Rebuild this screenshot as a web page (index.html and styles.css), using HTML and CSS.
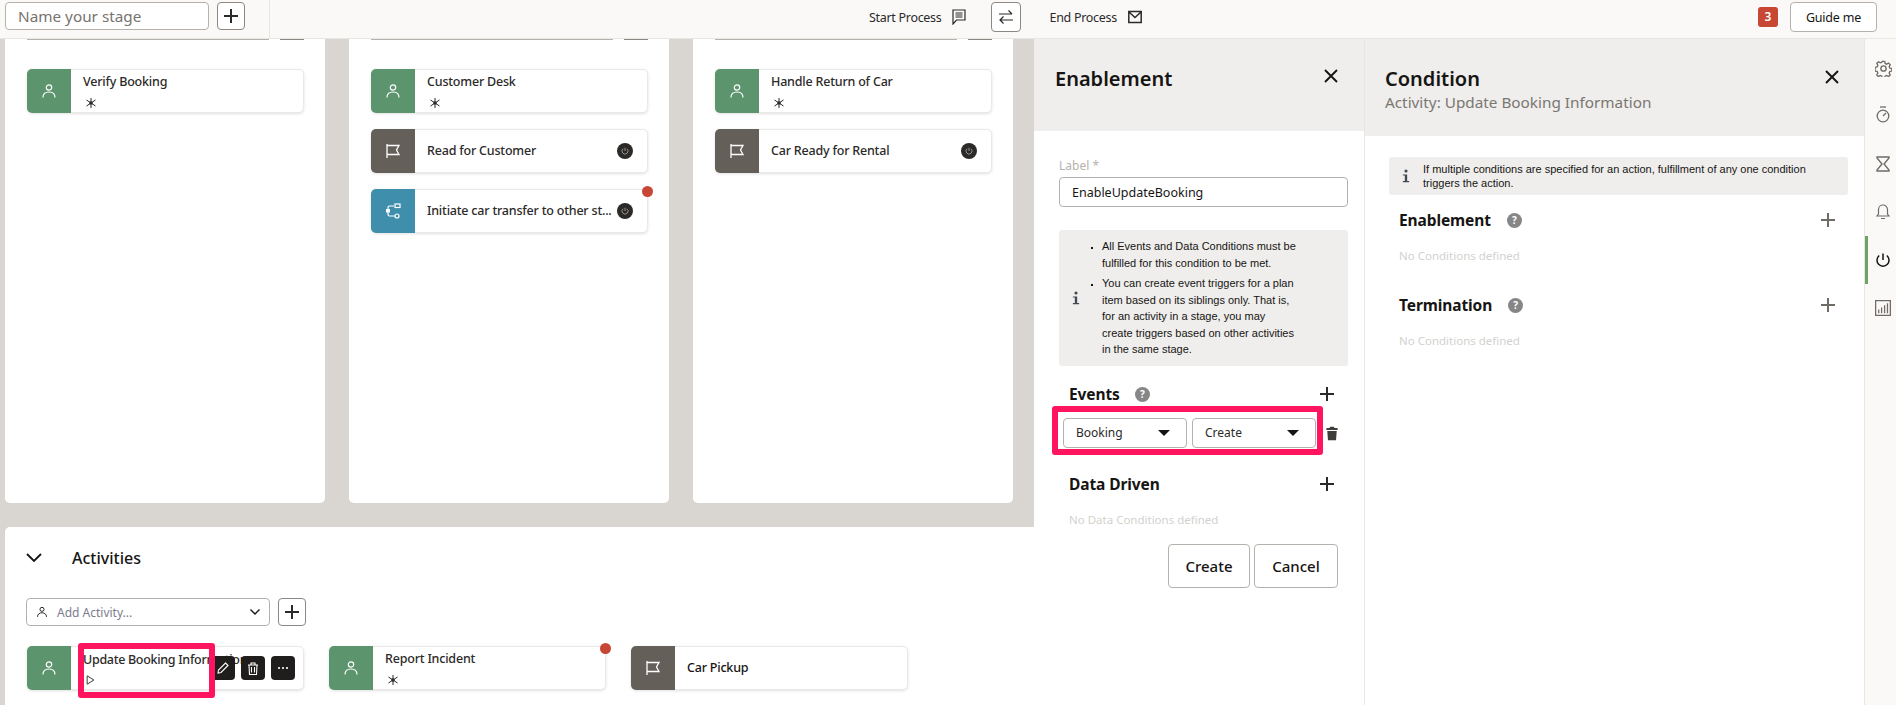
FILE: index.html
```html
<!DOCTYPE html>
<html>

<head>
    <meta charset="UTF-8">
    <title>Process Builder</title>
    <link rel="stylesheet" href="styles.css">
</head>

<body>
    <svg class="sprites" width="0" height="0">
        <symbol id="i-person" viewBox="0 0 16 16"><circle cx="8" cy="4.500" r="2.700" fill="none" stroke="currentColor" stroke-width="1.200"/><path d="M2 14.500c0-3.600 2.600-5.500 6-5.500s6 1.900 6 5.500" fill="none" stroke="currentColor" stroke-width="1.200"/></symbol>
        <symbol id="i-flag" viewBox="0 0 16 16"><path d="M2 1v14M2 2.500h12l-2.500 4.500 2.500 4.500H2" fill="none" stroke="currentColor" stroke-width="1.300"/></symbol>
        <symbol id="i-flow" viewBox="0 0 16 16"><path d="M9 3H4.500Q3 3 3 4.500v7Q3 13 4.500 13H10" fill="none" stroke="currentColor" stroke-width="1.200"/><rect x="10" y="1" width="5" height="3.500" fill="none" stroke="currentColor" stroke-width="1.200"/><rect x="1" y="6" width="4" height="3.500" fill="currentColor"/><circle cx="12" cy="13" r="2" fill="none" stroke="currentColor" stroke-width="1.200"/></symbol>
        <symbol id="i-star" viewBox="0 0 12 12"><path d="M6 1v10M1.500 3l9 6M10.500 3l-9 6" fill="none" stroke="currentColor" stroke-width="1"/><circle cx="6" cy="6" r="1.800" fill="currentColor"/></symbol>
        <symbol id="i-plus" viewBox="0 0 16 16"><path d="M8 1v14M1 8h14" fill="none" stroke="currentColor" stroke-width="2"/></symbol>
        <symbol id="i-close" viewBox="0 0 14 14"><path d="M1 1l12 12M13 1L1 13" fill="none" stroke="currentColor" stroke-width="1.900"/></symbol>
        <symbol id="i-power" viewBox="0 0 16 16"><path d="M8 1.500v6.500M4.200 3.500a6 6 0 1 0 7.600 0" fill="none" stroke="currentColor" stroke-width="1.500"/></symbol>
        <symbol id="i-info" viewBox="0 0 10 18"><circle cx="5" cy="2.500" r="2" fill="#3f4a55"/><path d="M1 7h5.500v8.500H9V17H1v-1.500h2.500V8.500H1z" fill="#3f4a55"/></symbol>
        <symbol id="i-trash" viewBox="0 0 14 16"><path d="M5 0h4l1 1.500h3.500V4H.5V1.500H4zM1.500 5h11l-.8 11H2.300z" fill="currentColor"/></symbol>
    </svg>

    <div class="topbar">
        <div class="stage-bar">
            <input class="stage-input" type="text" placeholder="Name your stage">
            <button class="icon-btn"><svg class="ico16"><use href="#i-plus"/></svg></button>
        </div>
        <div class="process-bar">
            <span class="process-label">Start Process</span>
            <svg class="process-icon" viewBox="0 0 14 16"><path d="M1 1h12v10H4.500L1 15zM3.500 4h7M3.500 6h7M3.500 8h7" fill="none" stroke="#2c2a28" stroke-width="1.200"/></svg>
            <button class="swap-btn"><svg width="16" height="16" viewBox="0 0 16 16"><path d="M1 5h13M10.500 1.500L14 5M15 11H2M5.500 7.500L2 11l3.500 3.500" fill="none" stroke="#2c2a28" stroke-width="1.200"/></svg></button>
            <span class="process-label">End Process</span>
            <svg class="process-icon" viewBox="0 0 14 14"><path d="M.8 1.500h12.400v11H.8zM1 2l6 5.500L13 2" fill="none" stroke="#2c2a28" stroke-width="1.500"/></svg>
        </div>
        <span class="count-badge">3</span>
        <button class="guide-btn">Guide me</button>
    </div>

    <div class="main">
        <div class="canvas">
            <div class="stages">
                <div class="stage">
                    <div class="stage-clip"><i></i><b></b></div>
                    <div class="task">
                        <span class="task-icon green"><svg class="ico16"><use href="#i-person"/></svg></span>
                        <div class="task-text"><div class="task-name">Verify Booking</div><svg class="task-state"><use href="#i-star"/></svg></div>
                    </div>
                </div>
                <div class="stage">
                    <div class="stage-clip"><i></i><b></b></div>
                    <div class="task">
                        <span class="task-icon green"><svg class="ico16"><use href="#i-person"/></svg></span>
                        <div class="task-text"><div class="task-name">Customer Desk</div><svg class="task-state"><use href="#i-star"/></svg></div>
                    </div>
                    <div class="task">
                        <span class="task-icon brown"><svg class="ico16"><use href="#i-flag"/></svg></span>
                        <div class="task-text"><div class="task-name">Read for Customer</div></div>
                        <span class="power-dot"><svg width="8" height="8"><use href="#i-power"/></svg></span>
                    </div>
                    <div class="task">
                        <span class="task-icon blue"><svg class="ico16"><use href="#i-flow"/></svg></span>
                        <div class="task-text"><div class="task-name">Initiate car transfer to other st...</div></div>
                        <span class="power-dot"><svg width="8" height="8"><use href="#i-power"/></svg></span>
                        <span class="red-dot"></span>
                    </div>
                </div>
                <div class="stage">
                    <div class="stage-clip"><i></i><b></b></div>
                    <div class="task">
                        <span class="task-icon green"><svg class="ico16"><use href="#i-person"/></svg></span>
                        <div class="task-text"><div class="task-name">Handle Return of Car</div><svg class="task-state"><use href="#i-star"/></svg></div>
                    </div>
                    <div class="task">
                        <span class="task-icon brown"><svg class="ico16"><use href="#i-flag"/></svg></span>
                        <div class="task-text"><div class="task-name">Car Ready for Rental</div></div>
                        <span class="power-dot"><svg width="8" height="8"><use href="#i-power"/></svg></span>
                    </div>
                </div>
            </div>

            <div class="activities">
                <div class="activities-head">
                    <svg width="16" height="10" viewBox="0 0 16 10"><path d="M1 1l7 7 7-7" fill="none" stroke="#161513" stroke-width="1.800"/></svg>
                    <span>Activities</span>
                </div>
                <div class="add-row">
                    <div class="add-select">
                        <svg class="ico12"><use href="#i-person"/></svg>
                        <span class="add-text">Add Activity...</span>
                        <svg width="10" height="6" viewBox="0 0 10 6"><path d="M.5.5L5 5 9.500.5" fill="none" stroke="#161513" stroke-width="1.400"/></svg>
                    </div>
                    <button class="icon-btn"><svg class="ico16"><use href="#i-plus"/></svg></button>
                </div>
                <div class="activity-row">
                    <div class="task">
                        <span class="task-icon green"><svg class="ico16"><use href="#i-person"/></svg></span>
                        <div class="task-text"><div class="task-name update-name">Update Booking Information</div><svg class="task-state play" viewBox="0 0 10 12"><path d="M1 1l8 5-8 5z" fill="none" stroke="#161513"/></svg></div>
                        <div class="task-tools">
                            <span class="tool"><svg width="12" height="12" viewBox="0 0 12 12"><path d="M8.500 1L11 3.500 4 10.500 1 11l.5-3z" fill="none" stroke="#fff" stroke-width="1.100"/></svg></span>
                            <span class="tool"><svg width="12" height="13" viewBox="0 0 12 13"><path d="M1 3h10M4 3V1h4v2M2 3l.5 9.500h7L10 3M4.500 5v5.500M7.500 5v5.500" fill="none" stroke="#fff" stroke-width="1.100"/></svg></span>
                            <span class="tool"><svg width="12" height="4" viewBox="0 0 12 4"><circle cx="2" cy="2" r="1.100" fill="#fff"/><circle cx="6" cy="2" r="1.100" fill="#fff"/><circle cx="10" cy="2" r="1.100" fill="#fff"/></svg></span>
                        </div>
                        <span class="callout"></span>
                    </div>
                    <div class="task">
                        <span class="task-icon green"><svg class="ico16"><use href="#i-person"/></svg></span>
                        <div class="task-text"><div class="task-name">Report Incident</div><svg class="task-state"><use href="#i-star"/></svg></div>
                        <span class="red-dot"></span>
                    </div>
                    <div class="task">
                        <span class="task-icon brown"><svg class="ico16"><use href="#i-flag"/></svg></span>
                        <div class="task-text"><div class="task-name dark">Car Pickup</div></div>
                    </div>
                </div>
            </div>
        </div>

        <div class="panel panel-enable">
            <div class="panel-head enable-head">
                <div class="panel-title">Enablement</div>
                <svg class="panel-close"><use href="#i-close"/></svg>
            </div>
            <div class="panel-body">
                <div class="field-label">Label *</div>
                <input class="field-input" type="text" value="EnableUpdateBooking">
                <div class="note enable-note">
                    <svg class="note-icon"><use href="#i-info"/></svg>
                    <ul>
                        <li>All Events and Data Conditions must be fulfilled for this condition to be met.</li>
                        <li>You can create event triggers for a plan item based on its siblings only. That is, for an activity in a stage, you may create triggers based on other activities in the same stage.</li>
                    </ul>
                </div>
                <div class="section-head events-head">
                    <span class="section-title">Events</span>
                    <span class="help">?</span>
                    <svg class="section-add"><use href="#i-plus"/></svg>
                </div>
                <div class="event-row">
                    <div class="event-box">
                        <div class="select">Booking<i class="caret"></i></div>
                        <div class="select">Create<i class="caret"></i></div>
                    </div>
                    <svg class="event-trash"><use href="#i-trash"/></svg>
                </div>
                <div class="section-head driven-head">
                    <span class="section-title">Data Driven</span>
                    <svg class="section-add"><use href="#i-plus"/></svg>
                </div>
                <div class="empty driven-empty">No Data Conditions defined</div>
                <div class="form-actions">
                    <button class="form-btn">Create</button>
                    <button class="form-btn">Cancel</button>
                </div>
            </div>
        </div>

        <div class="panel panel-cond">
            <div class="panel-head cond-head">
                <div>
                    <div class="panel-title">Condition</div>
                    <div class="panel-sub">Activity: Update Booking Information</div>
                </div>
                <svg class="panel-close"><use href="#i-close"/></svg>
            </div>
            <div class="panel-body">
                <div class="note cond-note">
                    <svg class="note-icon"><use href="#i-info"/></svg>
                    <p>If multiple conditions are specified for an action, fulfillment of any one condition triggers the action.</p>
                </div>
                <div class="section-head cond-section">
                    <span class="section-title">Enablement</span>
                    <span class="help">?</span>
                    <svg class="section-add grey"><use href="#i-plus"/></svg>
                </div>
                <div class="empty">No Conditions defined</div>
                <div class="section-head cond-section second">
                    <span class="section-title">Termination</span>
                    <span class="help">?</span>
                    <svg class="section-add grey"><use href="#i-plus"/></svg>
                </div>
                <div class="empty">No Conditions defined</div>
            </div>
        </div>

        <div class="rail">
            <div class="rail-item"><svg width="17" height="17" viewBox="0 0 16 16"><circle cx="8" cy="8" r="2.500" fill="none" stroke="currentColor" stroke-width="1.300"/><path d="M6.800 1h2.400l.4 2 1.600.7 1.800-1.100 1.700 1.700-1.100 1.800.7 1.600 2 .4v2.400l-2 .4-.7 1.600 1.100 1.800-1.700 1.700-1.800-1.100-1.600.7-.4 2H6.800l-.4-2-1.600-.7-1.800 1.100-1.700-1.700 1.100-1.800-.7-1.600-2-.4V6.800l2-.4.7-1.600-1.100-1.800 1.700-1.700 1.800 1.100 1.600-.7z" transform="translate(.4 .4) scale(.95)" fill="none" stroke="currentColor" stroke-width="1.300"/></svg></div>
            <div class="rail-item"><svg class="rail-timer" width="14" height="17" viewBox="0 0 14 17"><path d="M4 1h6" fill="none" stroke="currentColor" stroke-width="1.300"/><circle cx="7" cy="10" r="5.800" fill="none" stroke="currentColor" stroke-width="1.300"/><path d="M7 10l3-3" fill="none" stroke="currentColor" stroke-width="1.300"/></svg></div>
            <div class="rail-item"><svg width="14" height="16" viewBox="0 0 14 16"><path d="M1 1h12v1L8 8l5 6v1H1v-1l5-6-5-6z" fill="none" stroke="currentColor" stroke-width="1.400"/></svg></div>
            <div class="rail-item"><svg width="14" height="16" viewBox="0 0 14 16"><path d="M1 12h12l-1.500-2V5.500a4.500 4.500 0 0 0-9 0V10zM5 14.500h4" fill="none" stroke="currentColor" stroke-width="1.200"/></svg></div>
            <div class="rail-item rail-active"><svg width="16" height="16"><use href="#i-power"/></svg></div>
            <div class="rail-item"><svg width="16" height="16" viewBox="0 0 15 15"><path d="M.6.600h13.800v13.800H.6zM3.500 12.500V9M6.200 12.500V7M9 12.500V5M11.700 12.500V3" fill="none" stroke="currentColor" stroke-width="1.200"/></svg></div>
        </div>
    </div>
</body>

</html>
```

FILE: styles.css
```css
* {
    box-sizing: border-box;
}

html,
body {
    margin: 0;
    height: 705px;
    overflow: hidden;
}

body {
    font-family: "Noto Sans", "Liberation Sans", sans-serif;
    font-size: 13px;
    color: #161513;
    background-color: #fff;
}

button,
input {
    font-family: inherit;
}

.sprites {
    display: block;
    height: 0;
}

.ico16 {
    width: 16px;
    height: 16px;
}

.ico12 {
    width: 12px;
    height: 12px;
}

/* top bar */
.topbar {
    display: flex;
    align-items: flex-start;
    height: 39px;
    background-color: #fbf9f8;
    border-bottom: 1px solid #e8e6e3;
}

.stage-bar {
    display: flex;
    gap: 8px;
    width: 270px;
    height: 38px;
    padding: 2px 0 0 5px;
    border-right: 1px solid #e8e6e3;
}

.stage-input {
    width: 204px;
    height: 28px;
    padding: 0 12px;
    border: 1px solid #b5b2ae;
    border-radius: 4px;
    background-color: #fff;
    font-size: 15.300px;
}

.stage-input::placeholder {
    color: #77736e;
}

.icon-btn {
    display: flex;
    align-items: center;
    justify-content: center;
    width: 28px;
    height: 28px;
    padding: 0;
    border: 1px solid #8c8884;
    border-radius: 4px;
    background-color: #fff;
    color: #2c2a28;
}

.process-bar {
    display: flex;
    align-items: center;
    flex: 1;
    height: 34px;
    padding-left: 599px;
}

.process-label {
    font-size: 12.500px;
    letter-spacing: -.3px;
    color: #2c2a28;
}

.process-icon {
    width: 14px;
    height: 16px;
    margin-left: 11px;
}

.swap-btn {
    display: flex;
    align-items: center;
    justify-content: center;
    width: 30px;
    height: 30px;
    margin: 0 28px 0 25px;
    padding: 0;
    border: 1px solid #8c8884;
    border-radius: 4px;
    background-color: #fff;
}

.count-badge {
    width: 20px;
    height: 20px;
    margin: 7px 12px 0 0;
    border-radius: 3px;
    background-color: #c74634;
    color: #fff;
    font-size: 12px;
    font-weight: 600;
    line-height: 20px;
    text-align: center;
}

.guide-btn {
    width: 87px;
    height: 30px;
    margin: 2px 19px 0 0;
    padding: 0;
    border: 1px solid #b5b2ae;
    border-radius: 4px;
    background-color: #fff;
    color: #161513;
    font-size: 12.500px;
    letter-spacing: -.2px;
}

/* main */
.main {
    display: flex;
    height: 666px;
}

.canvas {
    width: 1034px;
    padding-left: 5px;
    background-color: #d9d6d1;
}

.stages {
    display: flex;
    gap: 24px;
    height: 464px;
}

.stage {
    width: 320px;
    padding: 0 21px 0 22px;
    background-color: #fff;
    border-radius: 0 0 5px 5px;
}

.stage-clip {
    display: flex;
    gap: 11px;
    height: 1px;
    margin-bottom: 29px;
}

.stage-clip i {
    width: 243px;
    background-color: #b5b2ae;
}

.stage-clip b {
    width: 24px;
    background-color: #8c8884;
}

/* task cards */
.task {
    position: relative;
    display: flex;
    align-items: center;
    height: 44px;
    margin-bottom: 16px;
    background-color: #fff;
    border: 1px solid #ebe9e7;
    border-radius: 5px;
    box-shadow: 0 1px 3px rgba(0, 0, 0, .12);
}

.task-icon {
    display: flex;
    align-items: center;
    justify-content: center;
    align-self: stretch;
    flex: none;
    width: 44px;
    margin: -1px 0 -1px -1px;
    border-radius: 5px 0 0 5px;
    color: #fff;
}

.green {
    background-color: #5b946d;
}

.brown {
    background-color: #645f59;
}

.blue {
    background-color: #3f8fac;
}

.task-text {
    flex: 1;
    min-width: 0;
    padding-left: 12px;
}

.task-name {
    font-size: 12.500px;
    font-weight: 500;
    letter-spacing: -.2px;
    line-height: 18px;
    color: #2c2a28;
    white-space: nowrap;
}

.task-name.dark {
    color: #161513;
}

.task-name.update-name {
    letter-spacing: -.3px;
}

.task-state {
    display: block;
    width: 12px;
    height: 12px;
    margin: 6px 0 0 2px;
    color: #2c2a28;
}

.task-state.play {
    width: 9px;
    height: 10px;
    margin-left: 3px;
}

.task:has(.task-state) .task-text {
    padding-bottom: 1px;
}

.power-dot {
    display: flex;
    align-items: center;
    justify-content: center;
    flex: none;
    width: 16px;
    height: 16px;
    margin: 0 14px 0 6px;
    border-radius: 50%;
    background-color: #2c2a28;
    color: #b5b2ae;
}

.red-dot {
    position: absolute;
    top: -4px;
    right: -6px;
    width: 11px;
    height: 11px;
    border-radius: 50%;
    background-color: #c74634;
}

.task-tools {
    position: absolute;
    top: 9px;
    right: 8px;
    display: flex;
    gap: 6px;
}

.tool {
    display: flex;
    align-items: center;
    justify-content: center;
    width: 24px;
    height: 24px;
    border-radius: 4px;
    background-color: #1f1e1c;
}

.callout {
    position: absolute;
    top: -4px;
    left: 50px;
    width: 137px;
    height: 55px;
    border: 6px solid #ff1460;
    border-radius: 3px;
}

/* activities */
.activities {
    height: 178px;
    margin-top: 24px;
    padding: 19px 0 0 21px;
    background-color: #fff;
    border-radius: 5px 0 0 0;
}

.activities-head {
    display: flex;
    align-items: center;
    height: 24px;
    font-size: 16px;
    font-weight: 500;
}

.activities-head span {
    margin-left: 30px;
}

.add-row {
    display: flex;
    gap: 8px;
    margin-top: 28px;
}

.add-select {
    display: flex;
    align-items: center;
    width: 244px;
    height: 28px;
    padding: 0 9px;
    border: 1px solid #b5b2ae;
    border-radius: 4px;
}

.add-text {
    flex: 1;
    margin-left: 9px;
    font-size: 12px;
    color: #7c7c8c;
}

.activity-row {
    display: flex;
    gap: 25px;
    margin: 20px 0 0 1px;
}

.activity-row .task {
    width: 277px;
}

/* side panels */
.panel {
    flex: none;
    background-color: #fff;
    border-right: 1px solid #e8e6e3;
}

.panel-enable {
    width: 331px;
}

.panel-cond {
    width: 500px;
}

.panel-head {
    display: flex;
    justify-content: space-between;
    background-color: #efeeec;
}

.enable-head {
    height: 92px;
    padding: 27px 26px 0 21px;
}

.cond-head {
    height: 97px;
    padding: 27px 25px 0 20px;
}

.panel-title {
    font-size: 20px;
    font-weight: 600;
    line-height: 26px;
}

.panel-sub {
    font-size: 15.300px;
    line-height: 20px;
    color: #7a7772;
}

.panel-close {
    width: 14px;
    height: 14px;
    margin-top: 3px;
}

.cond-head .panel-close {
    margin-top: 4px;
}

.panel-body {
    padding: 0 17px 0 25px;
}

.panel-cond .panel-body {
    padding: 0 16px 0 24px;
}

.field-label {
    margin-top: 27px;
    font-size: 12px;
    line-height: 16px;
    color: #b5b2ae;
}

.field-input {
    display: block;
    width: 289px;
    height: 30px;
    margin-top: 3px;
    padding: 0 12px;
    border: 1px solid #b5b2ae;
    border-radius: 4px;
    color: #161513;
    font-size: 12.500px;
}

.note {
    display: flex;
    align-items: center;
    background-color: #efeeec;
    border-radius: 3px;
    font-family: "Liberation Sans", Arial, sans-serif;
    color: #161513;
}

.note-icon {
    flex: none;
    width: 8px;
    height: 14px;
}

.enable-note {
    width: 289px;
    height: 136px;
    margin-top: 23px;
    padding-left: 13px;
    font-size: 11px;
    line-height: 16.500px;
}

.enable-note ul {
    width: 217px;
    margin: 0;
    padding: 0 0 0 22px;
    list-style: square;
}

.enable-note li + li {
    margin-top: 4px;
}

.enable-note li::marker {
    font-size: 8px;
}

.cond-note {
    height: 38px;
    margin-top: 21px;
    padding-left: 13px;
    font-size: 11px;
    line-height: 14.500px;
}

.cond-note p {
    width: 400px;
    margin: 0 0 0 13px;
}

.section-head {
    display: flex;
    align-items: center;
    height: 24px;
    margin-left: 10px;
}

.section-title {
    font-size: 15.500px;
    font-weight: 700;
    letter-spacing: -.1px;
}

.help {
    width: 15px;
    height: 15px;
    margin-left: 15px;
    border-radius: 50%;
    background-color: #868686;
    color: #fff;
    font-size: 10px;
    font-weight: 700;
    line-height: 15px;
    text-align: center;
}

.section-add {
    width: 16px;
    height: 16px;
    margin: 0 12px 0 auto;
    color: #2c2a28;
}

.section-add.grey {
    color: #6f6c68;
}

.events-head {
    margin-top: 16px;
}

.driven-head {
    margin-top: 17px;
}

.event-row {
    display: flex;
    align-items: center;
    margin-left: -7px;
}

.event-box {
    display: flex;
    gap: 5px;
    height: 49px;
    padding: 6px 1px 1px 5px;
    border: 6px solid #ff1460;
    border-radius: 3px;
}

.select {
    position: relative;
    width: 124px;
    height: 30px;
    padding-left: 12px;
    border: 1px solid #b5b2ae;
    border-radius: 4px;
    font-size: 12px;
    line-height: 28px;
    color: #2c2a28;
}

.caret {
    position: absolute;
    top: 11px;
    right: 16px;
    border-top: 6px solid #161513;
    border-left: 6px solid transparent;
    border-right: 6px solid transparent;
}

.event-trash {
    width: 12px;
    height: 15px;
    margin: 5px 0 0 3px;
    color: #3f3d3a;
}

.empty {
    margin: 16px 0 0 10px;
    font-size: 11.500px;
    line-height: 16px;
    color: #d3d1ce;
}

.form-actions {
    display: flex;
    justify-content: flex-end;
    gap: 4px;
    margin: 16px 9px 0 0;
}

.form-btn {
    width: 82px;
    height: 44px;
    padding: 0;
    border: 1px solid #b5b2ae;
    border-radius: 4px;
    background-color: #fff;
    color: #161513;
    font-size: 15px;
    font-weight: 500;
}

.form-btn:last-child {
    width: 84px;
}

.cond-section {
    margin-top: 13px;
}

.cond-section.second {
    margin-top: 29px;
}

.cond-section .help {
    margin-left: 16px;
}

/* right rail */
.rail {
    flex: none;
    width: 31px;
    padding-top: 5px;
    background-color: #fbf9f8;
    color: #6f6c68;
}

.rail-item {
    display: flex;
    align-items: center;
    justify-content: center;
    height: 48px;
    padding-left: 5px;
}

.rail-timer {
    margin-top: -3px;
}

.rail-active {
    border-left: 3px solid #6ea36b;
    padding-left: 2px;
    color: #161513;
}
```
